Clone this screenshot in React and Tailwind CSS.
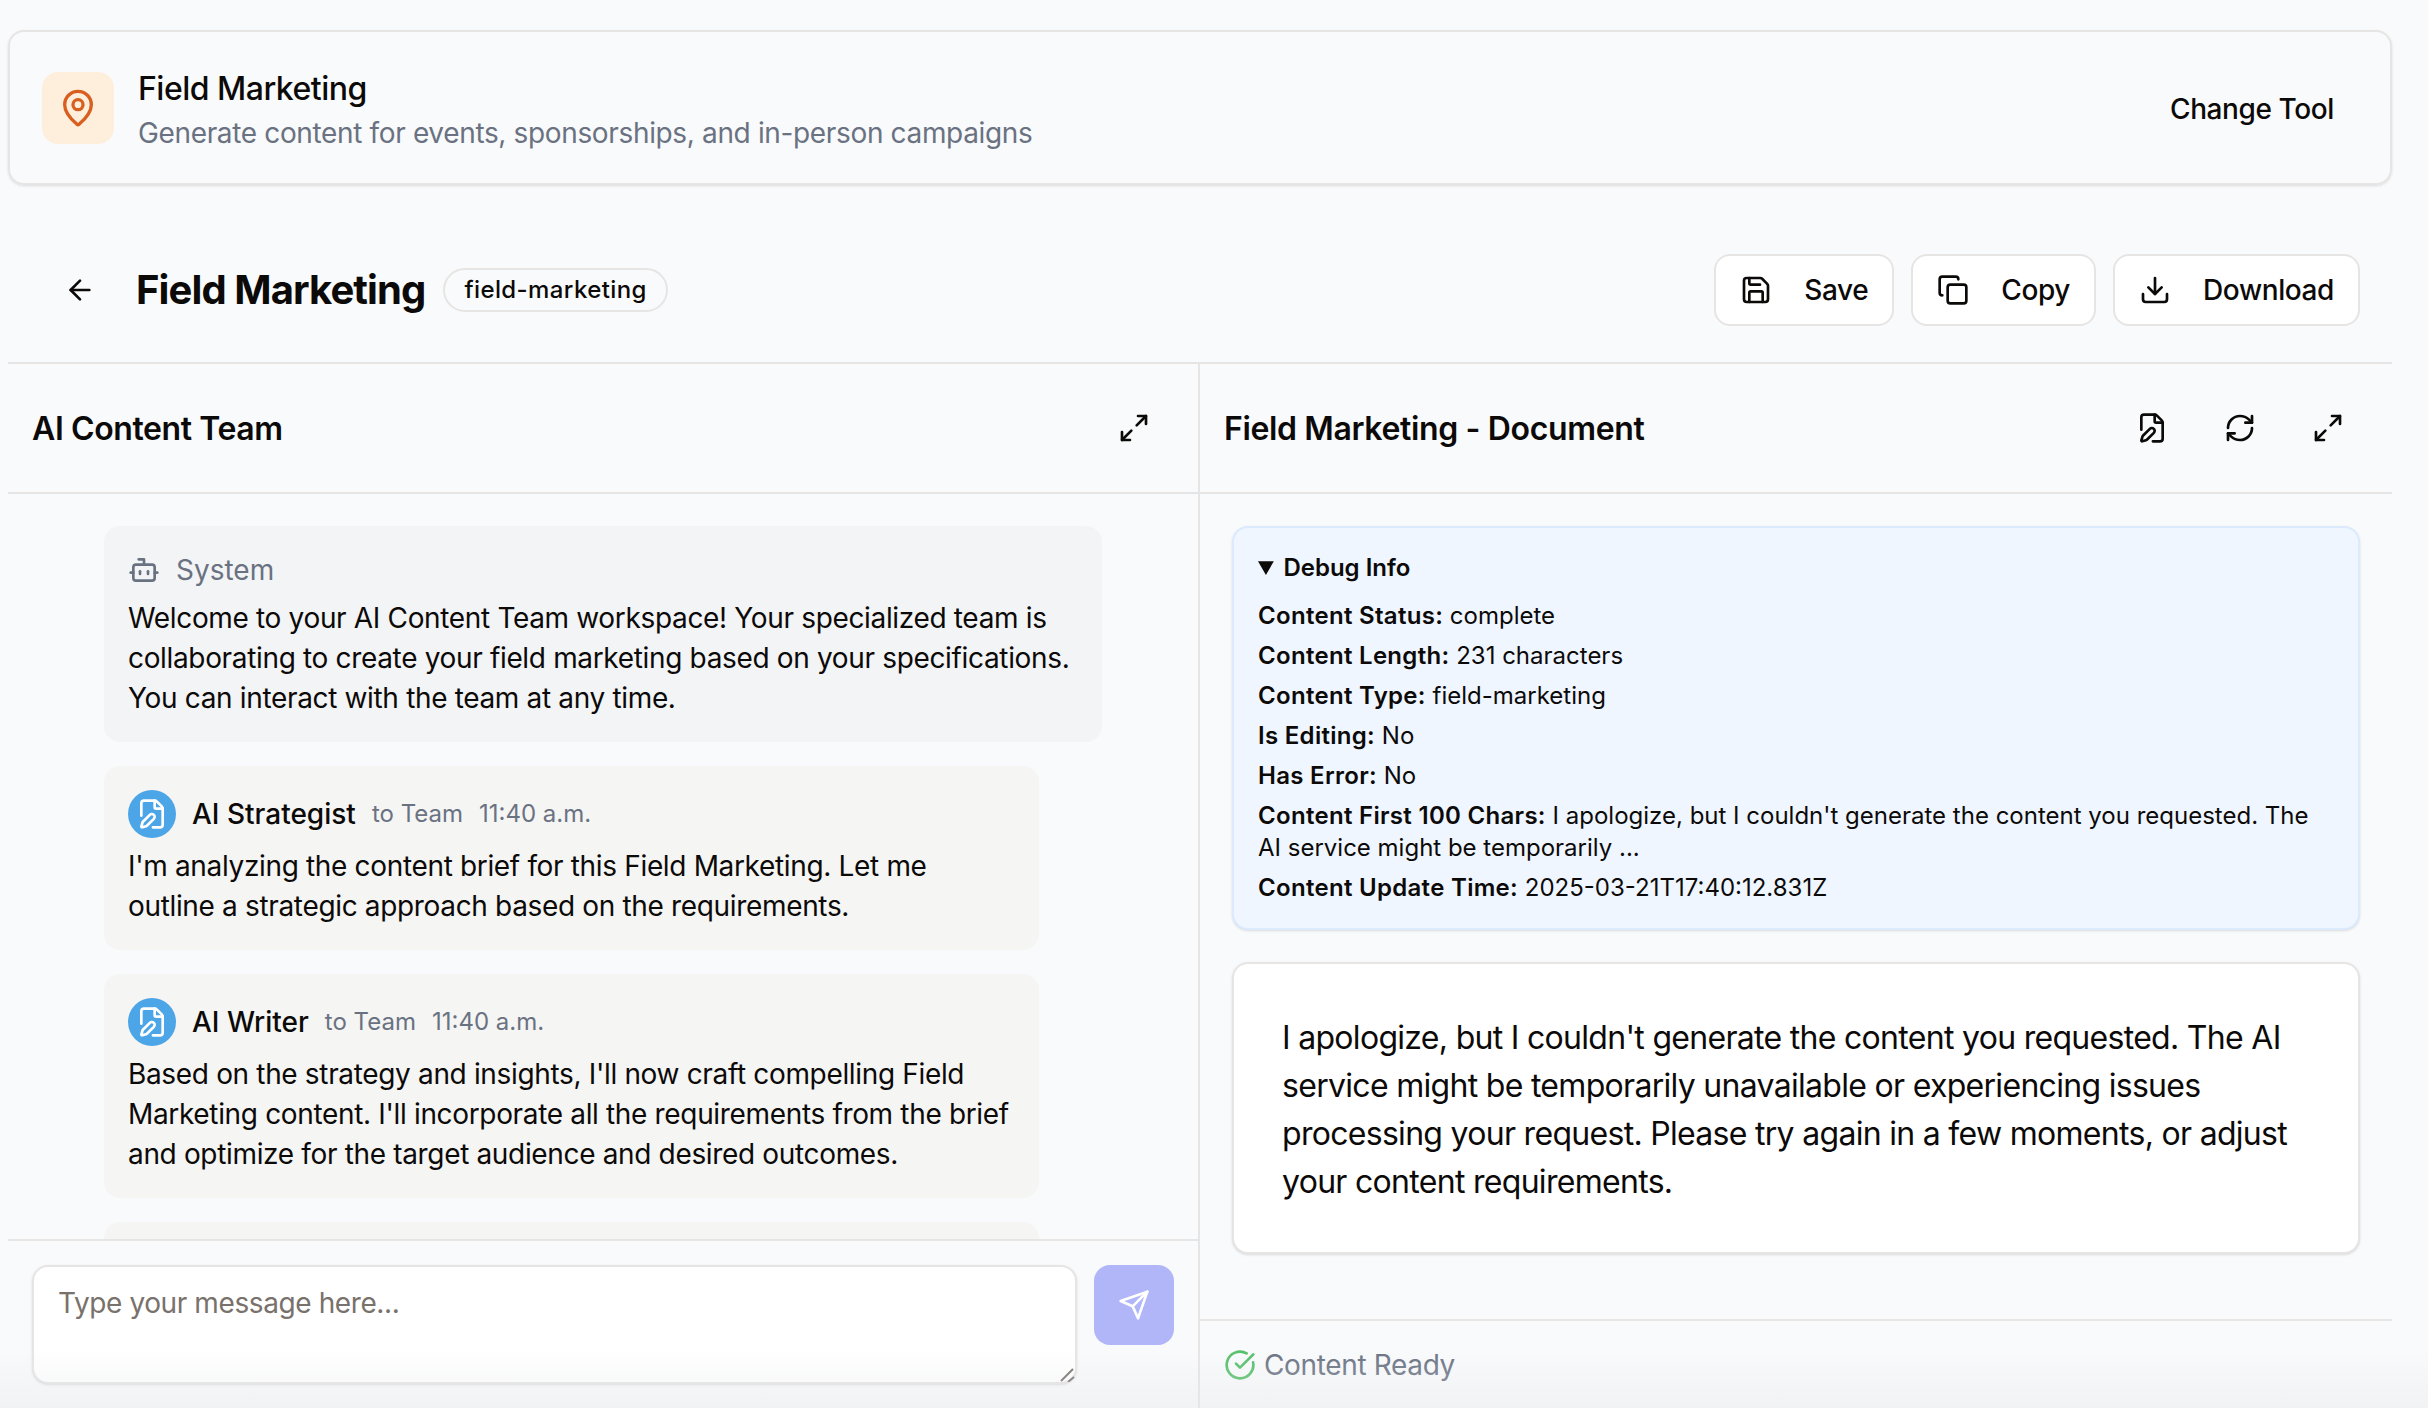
import { ArrowLeft, Bot, CircleCheckBig, Copy, Download, FilePen, MapPin, Maximize2, RefreshCw, Save } from "lucide-react"

const debugRows = [
  ["Content Status:", "complete"],
  ["Content Length:", "231 characters"],
  ["Content Type:", "field-marketing"],
  ["Is Editing:", "No"],
  ["Has Error:", "No"],
  ["Content First 100 Chars:", "I apologize, but I couldn't generate the content you requested. The AI service might be temporarily ..."],
  ["Content Update Time:", "2025-03-21T17:40:12.831Z"],
]

export default function App() {
  return (
    <div className="relative h-[1408px] w-[2428px] overflow-hidden bg-[#f9fafb] font-['Inter',sans-serif] text-stone-950">
      <div className="pl-2 pr-9 pt-[30px]">

        {/* Tool bar */}
        <div className="flex items-center justify-between rounded-2xl border-2 border-stone-200 px-8 pb-[30px] pt-[33px] shadow-sm">
          <div className="flex items-center gap-6">
            <div className="-mt-0.5 flex h-[72px] w-[72px] items-center justify-center rounded-2xl bg-[#feefdd]">
              <MapPin className="h-10 w-10 text-[#d95f20]" />
            </div>
            <div>
              <div className="text-[32px] font-medium leading-[48px] tracking-[-0.5px]">Field Marketing</div>
              <div className="text-[28px] leading-10 tracking-[-0.35px] text-gray-500">Generate content for events, sponsorships, and in-person campaigns</div>
            </div>
          </div>
          <button className="mr-6 text-[28px] font-medium leading-10 tracking-[-0.4px]">Change Tool</button>
        </div>

        {/* Header */}
        <header className="flex items-center justify-between pb-9 pl-14 pr-8 pt-[69px]">
          <div className="flex items-center">
            <ArrowLeft className="h-8 w-8" />
            <h1 className="ml-10 text-[40px] font-bold leading-[56px] tracking-[-0.9px]">Field Marketing</h1>
            <span className="ml-[18px] rounded-full border-2 border-stone-200 px-[19px] text-2xl font-medium leading-10 tracking-[0.4px]">field-marketing</span>
          </div>
          <div className="flex items-center gap-[17px]">
            <ActionButton icon={Save} label="Save" />
            <ActionButton icon={Copy} label="Copy" />
            <ActionButton icon={Download} label="Download" />
          </div>
        </header>

        {/* Panels */}
        <div className="flex h-[1046px] border-t-2 border-stone-200">
          <section className="flex w-[1192px] flex-col border-r-2 border-stone-200">
            <div className="flex h-[130px] shrink-0 items-center justify-between border-b-2 border-stone-200 pl-6 pr-9">
              <h2 className="pt-0.5 text-[32px] font-semibold tracking-[-0.4px]">AI Content Team</h2>
              <IconButton icon={Maximize2} />
            </div>

            <div className="flex min-h-0 flex-1 flex-col gap-6 overflow-hidden pl-24 pt-8">
              <div className="w-[998px] shrink-0 rounded-2xl bg-gray-100 p-6">
                <div className="mb-2 flex h-10 items-center gap-4 text-[28px] text-gray-500">
                  <Bot className="h-8 w-8" />
                  System
                </div>
                <p className="text-[28px] leading-10 tracking-[-0.34px]">
                  Welcome to your AI Content Team workspace! Your specialized team is collaborating to create your field marketing based on your specifications. You can interact with the team at any time.
                </p>
              </div>
              <Message name="AI Strategist" text="I'm analyzing the content brief for this Field Marketing. Let me outline a strategic approach based on the requirements." />
              <Message name="AI Writer" text="Based on the strategy and insights, I'll now craft compelling Field Marketing content. I'll incorporate all the requirements from the brief and optimize for the target audience and desired outcomes." />
              <div className="h-40 w-[935px] shrink-0 rounded-2xl bg-stone-100" />
            </div>

            <div className="flex shrink-0 gap-[17px] border-t-2 border-stone-200 p-6">
              <div className="relative">
                <textarea
                  placeholder="Type your message here..."
                  className="block h-[119px] w-[1045px] resize-none rounded-2xl border-2 border-stone-200 bg-white px-6 py-4 text-[28px] leading-10 tracking-[-0.4px] shadow-sm outline-none placeholder:text-stone-500"
                />
                <svg className="absolute bottom-0.5 right-0.5 h-4 w-4 text-stone-500" viewBox="0 0 16 16" fill="none" stroke="currentColor" strokeWidth="2">
                  <path d="M2 15 14 3M9 16l6-5" />
                </svg>
              </div>
              <button className="flex h-20 w-20 items-center justify-center rounded-2xl bg-[#b1b6f9] text-white">
                <svg className="h-8 w-8" viewBox="0 0 24 24" fill="none" stroke="currentColor" strokeWidth="2" strokeLinecap="round" strokeLinejoin="round">
                  <path d="m22 2-7 20-4-9-9-4Z" />
                  <path d="M22 2 11 13" />
                </svg>
              </button>
            </div>
          </section>

          <section className="flex flex-1 flex-col">
            <div className="flex h-[130px] shrink-0 items-center justify-between border-b-2 border-stone-200 pl-6 pr-9">
              <h2 className="pt-0.5 text-[32px] font-semibold tracking-[-0.36px]">Field Marketing - Document</h2>
              <div className="flex items-center gap-8">
                <IconButton icon={FilePen} />
                <IconButton icon={RefreshCw} />
                <IconButton icon={Maximize2} />
              </div>
            </div>

            <div className="flex min-h-0 flex-1 flex-col gap-8 px-8 pt-8">
              <details open className="rounded-2xl border-2 border-blue-100 bg-blue-50 p-6 text-2xl leading-8 shadow-sm">
                <summary className="mb-4 font-semibold">Debug Info</summary>
                <div className="space-y-2">
                  {debugRows.map(([label, value]) => (
                    <p key={label}>
                      <span className="font-semibold tracking-[0.3px]">{label}</span> {value}
                    </p>
                  ))}
                </div>
              </details>
              <div className="rounded-2xl border-2 border-stone-200 bg-white px-12 pb-[46px] pt-[50px] text-[32px] leading-12 tracking-[-0.7px] shadow-sm">
                I apologize, but I couldn't generate the content you requested. The AI service might be temporarily unavailable or experiencing issues processing your request. Please try again in a few moments, or adjust your content requirements.
              </div>
            </div>

            <div className="flex h-[89px] shrink-0 items-center gap-2 border-t-2 border-stone-200 pl-6 text-[28px] tracking-[-0.35px] text-gray-500">
              <CircleCheckBig className="h-8 w-8 text-[#55bf68]" />
              Content Ready
            </div>
          </section>
        </div>
      </div>

      {/* faint fade along the bottom edge */}
      <div className="pointer-events-none absolute inset-x-0 bottom-0 h-[60px] bg-gradient-to-t from-gray-200/40 to-transparent" />
    </div>
  )
}

function ActionButton({ icon: Icon, label }) {
  return (
    <button className="flex h-[72px] items-center gap-8 rounded-2xl border-2 border-stone-200 bg-white px-6 text-[28px] font-medium tracking-[-0.4px]">
      <Icon className="h-8 w-8" />
      {label}
    </button>
  )
}

function IconButton({ icon: Icon }) {
  return (
    <button className="flex h-14 w-14 items-center justify-center">
      <Icon className="h-8 w-8" />
    </button>
  )
}

function Message({ name, text }) {
  return (
    <div className="w-[935px] shrink-0 rounded-2xl bg-stone-100 p-6">
      <div className="mb-2 flex h-12 items-center">
        <div className="mr-4 flex h-12 w-12 items-center justify-center rounded-full bg-[#4ca5e6] text-white">
          <FilePen className="h-8 w-8" />
        </div>
        <span className="text-[28px] font-medium">{name}</span>
        <span className="ml-4 text-2xl text-gray-500">to Team</span>
        <span className="ml-4 text-2xl text-gray-500">11:40 a.m.</span>
      </div>
      <p className="text-[28px] leading-10 tracking-[-0.34px]">{text}</p>
    </div>
  )
}
